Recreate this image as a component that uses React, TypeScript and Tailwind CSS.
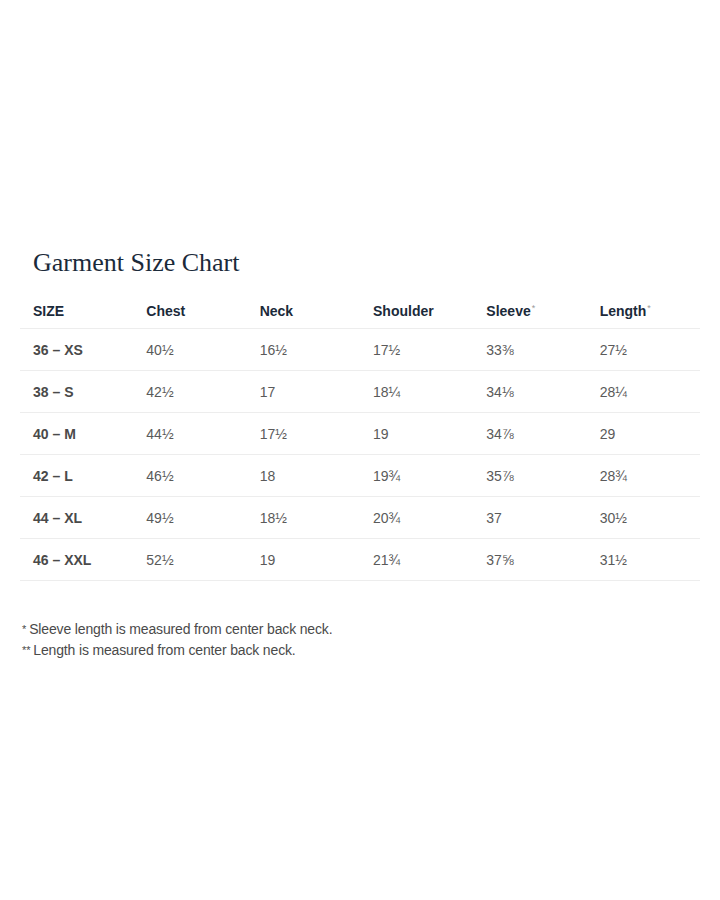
const columns = ["SIZE", "Chest", "Neck", "Shoulder", "Sleeve", "Length"];

const rows = [
  ["36 – XS", "40½", "16½", "17½", "33⅜", "27½"],
  ["38 – S", "42½", "17", "18¼", "34⅛", "28¼"],
  ["40 – M", "44½", "17½", "19", "34⅞", "29"],
  ["42 – L", "46½", "18", "19¾", "35⅞", "28¾"],
  ["44 – XL", "49½", "18½", "20¾", "37", "30½"],
  ["46 – XXL", "52½", "19", "21¾", "37⅝", "31½"],
];

const starred = ["Sleeve", "Length"];

export default function App() {
  return (
    <div
      className="min-h-[900px] bg-white px-[20px] pt-[245px]"
      style={{ fontFamily: '"Liberation Sans", Arial, sans-serif' }}
    >
      <h2
        className="pl-[13px] text-[26px] leading-[36px] text-[#1b2a3a]"
        style={{ fontFamily: '"Liberation Serif", "Times New Roman", serif' }}
      >
        Garment Size Chart
      </h2>

      <div className="mt-[12px] w-[680px]">
        <div className="grid h-[36px] grid-cols-6 items-center border-b border-[#ededed] pt-[1px]">
          {columns.map((col) => (
            <div key={col} className="pl-[13px] text-[14px] font-bold text-[#1b2a3a]">
              {col}
              {starred.includes(col) && (
                <sup className="ml-[1px] text-[9px] font-normal text-[#9a9a9a]">*</sup>
              )}
            </div>
          ))}
        </div>
        {rows.map((row) => (
          <div
            key={row[0]}
            className="grid h-[42px] grid-cols-6 items-center border-b border-[#ededed] pt-[2px]"
          >
            {row.map((cell, i) => (
              <div
                key={i}
                className={
                  i === 0
                    ? "pl-[13px] text-[14px] font-bold text-[#4a4a4a]"
                    : "pl-[13px] text-[14px] text-[#5a5a5a]"
                }
              >
                {cell}
              </div>
            ))}
          </div>
        ))}
      </div>

      <div className="mt-[38px] pl-[2px] text-[14px] leading-[21px] tracking-[-0.15px] text-[#4a4a4a]">
        <p>
          <span className="mr-[3px] align-top text-[11px]">*</span>Sleeve length is measured from center back neck.
        </p>
        <p>
          <span className="mr-[3px] align-top text-[11px]">**</span>Length is measured from center back neck.
        </p>
      </div>
    </div>
  );
}
